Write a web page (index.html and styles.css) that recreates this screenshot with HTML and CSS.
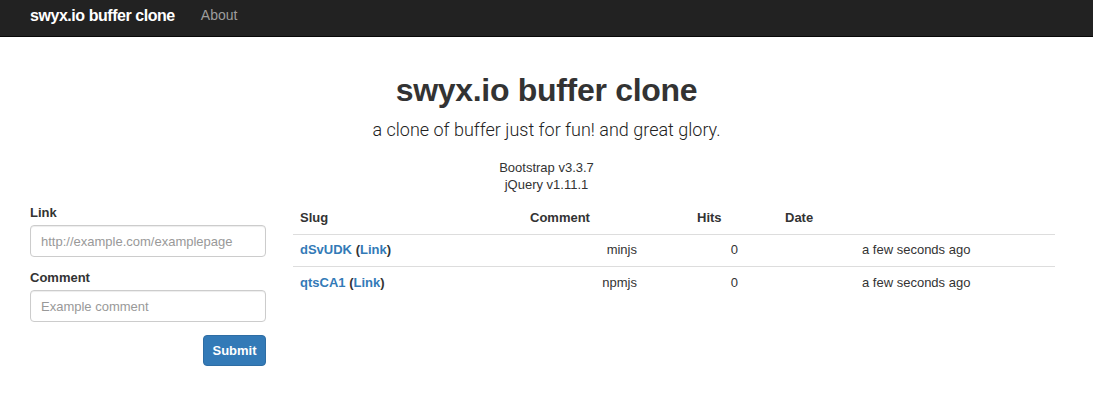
FILE: index.html
```html
<!DOCTYPE html>
<html>
<head>
<meta charset="utf-8">
<link rel="stylesheet" href="styles.css">
</head>
<body>
<nav class="navbar">
  <a class="brand" href="#">swyx.io buffer clone</a>
  <a class="nav-link" href="#">About</a>
</nav>
<header class="hero">
  <h1 class="title">swyx.io buffer clone</h1>
  <p class="lead">a clone of buffer just for fun! and great glory.</p>
  <div class="versions">
    <div>Bootstrap v3.3.7</div>
    <div>jQuery v1.11.1</div>
  </div>
</header>
<main class="content">
  <form class="form">
    <label class="label">Link</label>
    <input class="input" type="text" placeholder="http://example.com/examplepage">
    <label class="label label-2">Comment</label>
    <input class="input" type="text" placeholder="Example comment">
    <div class="actions"><button type="button" class="btn">Submit</button></div>
  </form>
  <section class="table">
    <div class="thead">
      <div class="th th-slug">Slug</div>
      <div class="th th-comment">Comment</div>
      <div class="th th-hits">Hits</div>
      <div class="th th-date">Date</div>
    </div>
    <div class="tr">
      <div class="td td-slug"><a href="#">dSvUDK</a> (<a href="#">Link</a>)</div>
      <div class="td td-comment">minjs</div>
      <div class="td td-hits">0</div>
      <div class="td td-date">a few seconds ago</div>
    </div>
    <div class="tr">
      <div class="td td-slug"><a href="#">qtsCA1</a> (<a href="#">Link</a>)</div>
      <div class="td td-comment">npmjs</div>
      <div class="td td-hits">0</div>
      <div class="td td-date">a few seconds ago</div>
    </div>
  </section>
</main>
</body>
</html>
```

FILE: styles.css
```css
* { box-sizing: border-box; }
html, body { margin: 0; padding: 0; }
body {
  font-family: "Liberation Sans", Arial, sans-serif;
  font-size: 13px;
  line-height: 1.42857;
  color: #333;
  background: #fff;
}
a { color: #337ab7; text-decoration: none; }

.navbar {
  height: 37px;
  background: #222;
  border-bottom: 1px solid #080808;
  display: flex;
  align-items: center;
  padding: 0 30px;
  padding-bottom: 4px;
}
.brand {
  color: #fff;
  font-size: 16px;
  font-weight: bold;
  letter-spacing: -0.45px;
}
.nav-link {
  color: #9d9d9d;
  font-size: 14px;
  margin-left: 26px;
}

.hero { text-align: center; }
.title {
  margin: 33px 0 0;
  font-size: 32px;
  line-height: 40px;
  font-weight: bold;
  letter-spacing: -0.3px;
}
.lead {
  margin: 8px 0 0;
  font-size: 18px;
  line-height: 24px;
  font-family: Roboto, "Liberation Sans", sans-serif;
  font-weight: 300;
  color: #222;
}
.versions {
  margin-top: 17px;
  font-size: 13px;
  line-height: 17px;
}

.content {
  display: flex;
  padding: 0 30px;
  margin-top: 10px;
  gap: 27px;
}
.form { width: 236px; flex: none; }
.label {
  display: block;
  font-weight: bold;
  line-height: 20px;
  margin-bottom: 2px;
}
.label-2 { margin-top: 11px; }
.input {
  display: block;
  width: 100%;
  height: 32px;
  border: 1px solid #ccc;
  border-radius: 4px;
  padding: 6px 10px;
  font-family: "Liberation Sans", Arial, sans-serif;
  font-size: 13px;
  color: #555;
  box-shadow: inset 0 1px 1px rgba(0,0,0,.075);
}
.input::placeholder { color: #999; }
.actions { display: flex; justify-content: flex-end; margin-top: 13px; }
.btn {
  width: 63px;
  height: 31px;
  background: #337ab7;
  border: 1px solid #2e6da4;
  border-radius: 4px;
  color: #fff;
  font-family: "Liberation Sans", Arial, sans-serif;
  font-size: 13px;
  font-weight: bold;
  padding: 0;
}

.table { width: 762px; flex: none; }
.thead, .tr {
  display: flex;
  height: 32px;
  align-items: center;
  border-bottom: 1px solid #ddd;
}
.th { font-weight: bold; }
.th-slug { width: 237px; padding-left: 7px; }
.th-comment { width: 167px; }
.th-hits { width: 88px; }
.th-date { flex: 1; }
.td-slug { width: 237px; padding-left: 7px; font-weight: bold; color: #333; }
.td-comment { width: 107px; text-align: right; }
.td-hits { width: 101px; text-align: right; }
.td-date { flex: 1; padding-left: 124px; }
.tr:last-child { border-bottom: none; }
```
